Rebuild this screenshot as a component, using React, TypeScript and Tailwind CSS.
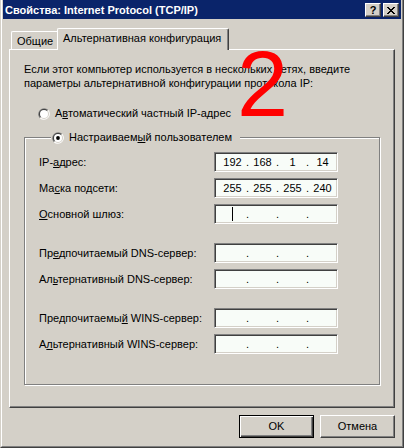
import { Fragment, type ReactNode } from 'react'

// classic 3D radio button, 12x12
function Radio({ checked }: { checked?: boolean }) {
  return (
    <svg width="12" height="12" viewBox="0 0 12 12" className="shrink-0">
      <path d="M1.76 10.24A6 6 0 0 1 10.24 1.76Z" fill="#808080" />
      <path d="M10.24 1.76A6 6 0 0 1 1.76 10.24Z" fill="#ffffff" />
      <path d="M2.46 9.54A5 5 0 0 1 9.54 2.46Z" fill="#404040" />
      <path d="M9.54 2.46A5 5 0 0 1 2.46 9.54Z" fill="#d4d0c8" />
      <circle cx="6" cy="6" r="4" fill="#ffffff" />
      {checked && <circle cx="6" cy="6" r="1.9" fill="#000000" />}
    </svg>
  )
}

function CaptionButton({ children }: { children: ReactNode }) {
  return (
    <div className="flex h-[14px] w-[16px] items-center justify-center border border-t-white border-l-white border-r-[#404040] border-b-[#404040] bg-[#d4d0c8] shadow-[inset_-1px_-1px_0_#808080]">
      {children}
    </div>
  )
}

function IpField({ octets, caret }: { octets?: string[]; caret?: boolean }) {
  const vals = octets ?? ['', '', '', '']
  return (
    <div className="flex h-[20px] w-[124px] items-center border border-t-[#808080] border-l-[#808080] border-r-white border-b-white bg-[#f8fcf8] pl-[5px] shadow-[inset_1px_1px_0_#404040,inset_-1px_-1px_0_#d4d0c8]">
      {vals.map((v, i) => (
        <Fragment key={i}>
          {i > 0 && <span className="w-[5px] text-center">.</span>}
          <span className="flex w-[25px] justify-center">
            {v}
            {caret && i === 0 && <span className="h-[14px] w-px bg-black" />}
          </span>
        </Fragment>
      ))}
    </div>
  )
}

function Row({ label, children }: { label: ReactNode; children: ReactNode }) {
  return (
    <div className="flex h-[20px] items-center">
      <span className="w-[175px]">{label}</span>
      {children}
    </div>
  )
}

export default function App() {
  return (
    <div className="relative h-[448px] w-[404px] overflow-hidden border-r border-b border-r-[#404040] border-b-[#404040] border-l border-l-[#d4d0c8] bg-[#d4d0c8] font-['Liberation_Sans',Arial,sans-serif] text-[11px] leading-[13px] text-black">
      <div className="flex h-full flex-col border-r border-b border-r-[#808080] border-b-[#808080] border-l border-l-white px-px pb-px">
        {/* Title bar */}
        <div className="flex h-[19px] shrink-0 items-center justify-between bg-[#0a246a] pl-[2px] pr-[2px]">
          <span className="pt-[2px] font-bold text-white">Свойства: Internet Protocol (TCP/IP)</span>
          <div className="flex gap-[2px] pt-[1px]">
            <CaptionButton>
              <span className="text-[11px] font-bold leading-none">?</span>
            </CaptionButton>
            <CaptionButton>
              <svg width="8" height="7" viewBox="0 0 8 7" shapeRendering="crispEdges">
                <path
                  d="M0 0h2v1H0zM6 0h2v1H6zM1 1h2v1H1zM5 1h2v1H5zM2 2h4v1H2zM3 3h2v1H3zM2 4h4v1H2zM1 5h2v1H1zM5 5h2v1H5zM0 6h2v1H0zM6 6h2v1H6z"
                  fill="#000"
                />
              </svg>
            </CaptionButton>
          </div>
        </div>

        <div className="flex flex-1 flex-col px-[6px]">
          {/* Tabs */}
          <div className="flex h-[30px] shrink-0 items-end pl-[2px]">
            <div className="h-[18px] w-[46px] rounded-tl-[2px] border-t border-l border-t-white border-l-white pl-[5px] pt-[3px]">
              Общие
            </div>
            <div className="relative z-10 -mb-px h-[22px] w-[172px] rounded-t-[2px] border-t border-l border-r border-t-white border-l-white border-r-[#404040] bg-[#d4d0c8] pl-[5px] pt-[3px] shadow-[inset_-1px_0_0_#808080]">
              Альтернативная конфигурация
            </div>
          </div>

          {/* Tab page */}
          <div className="h-[359px] shrink-0 border border-t-white border-l-white border-r-[#404040] border-b-[#404040] pl-[14px] pt-[12px] shadow-[inset_-1px_-1px_0_#808080]">
            <p className="leading-[14px]">
              Если этот компьютер используется в нескольких сетях, введите
              <br />
              параметры альтернативной конфигурации протокола IP:
            </p>

            <div className="ml-[14px] mt-[17px] flex h-[13px] items-center gap-[5px]">
              <Radio />
              <span>
                А<u>в</u>томатический частный IP-адрес
              </span>
            </div>

            <fieldset className="mt-[11px] w-[356px] border border-[#808080] pb-[30px] pl-[14px] pt-[8px] shadow-[inset_1px_1px_0_white,1px_1px_0_white]">
              <legend className="ml-[12px] flex items-center gap-[5px] bg-[#d4d0c8] pl-px pr-[8px]">
                <Radio checked />
                <span>
                  Настраиваем<u>ы</u>й пользователем
                </span>
              </legend>

              <div className="flex flex-col gap-[19px]">
                <div className="flex flex-col gap-[6px]">
                  <Row label={<>IP-<u>а</u>дрес:</>}>
                    <IpField octets={['192', '168', '1', '14']} />
                  </Row>
                  <Row label={<>Ма<u>с</u>ка подсети:</>}>
                    <IpField octets={['255', '255', '255', '240']} />
                  </Row>
                  <Row label={<><u>О</u>сновной шлюз:</>}>
                    <IpField caret />
                  </Row>
                </div>
                <div className="flex flex-col gap-[6px]">
                  <Row label={<>Пр<u>е</u>дпочитаемый DNS-сервер:</>}>
                    <IpField />
                  </Row>
                  <Row label={<>Ал<u>ь</u>тернативный DNS-сервер:</>}>
                    <IpField />
                  </Row>
                </div>
                <div className="flex flex-col gap-[6px]">
                  <Row label={<>Предпочитаемы<u>й</u> WINS-сервер:</>}>
                    <IpField />
                  </Row>
                  <Row label={<>А<u>л</u>ьтернативный WINS-сервер:</>}>
                    <IpField />
                  </Row>
                </div>
              </div>
            </fieldset>
          </div>

          {/* Dialog buttons */}
          <div className="mt-[7px] flex justify-end gap-[6px]">
            <button className="flex h-[23px] w-[75px] items-center justify-center border border-black bg-[#d4d0c8] shadow-[inset_1px_1px_0_white,inset_-1px_-1px_0_#404040,inset_-2px_-2px_0_#808080]">
              OK
            </button>
            <button className="flex h-[23px] w-[75px] items-center justify-center border border-t-white border-l-white border-r-[#404040] border-b-[#404040] bg-[#d4d0c8] shadow-[inset_-1px_-1px_0_#808080]">
              Отмена
            </button>
          </div>
        </div>
      </div>

      {/* hand-drawn marker */}
      <span className="absolute left-[236px] top-[38px] text-[92px] leading-none text-[#ff0000]">2</span>
    </div>
  )
}
